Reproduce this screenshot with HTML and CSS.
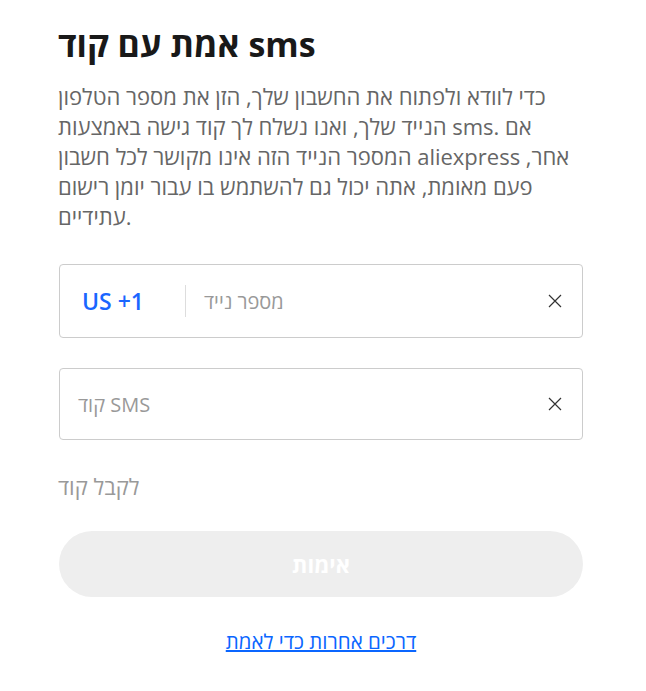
FILE: index.html
```html
<!DOCTYPE html>
<html lang="he">
<head>
<meta charset="utf-8">
<link rel="stylesheet" href="styles.css">
</head>
<body>
<div class="page">
  <h1 class="title">אמת עם קוד sms</h1>
  <p class="desc">כדי לוודא ולפתוח את החשבון שלך, הזן את מספר הטלפון הנייד שלך, ואנו נשלח לך קוד גישה באמצעות sms. אם המספר הנייד הזה אינו מקושר לכל חשבון aliexpress אחר, פעם מאומת, אתה יכול גם להשתמש בו עבור יומן רישום עתידיים.</p>
  <div class="field field-phone">
    <span class="country">US +1</span>
    <span class="divider"></span>
    <span class="placeholder">מספר נייד</span>
    <span class="clear"><svg width="14" height="14" viewBox="0 0 14 14"><path d="M1 1L13 13M13 1L1 13" stroke="#333" stroke-width="1.2" fill="none"/></svg></span>
  </div>
  <div class="field field-code">
    <span class="placeholder">קוד SMS</span>
    <span class="clear"><svg width="14" height="14" viewBox="0 0 14 14"><path d="M1 1L13 13M13 1L1 13" stroke="#333" stroke-width="1.2" fill="none"/></svg></span>
  </div>
  <div class="getcode">לקבל קוד</div>
  <button class="verify">אימות</button>
  <div class="other"><a href="#">דרכים אחרות כדי לאמת</a></div>
</div>
</body>
</html>
```
FILE: styles.css
```css
html, body {
  margin: 0;
  padding: 0;
  background: #fff;
}
body {
  font-family: "Open Sans", "Noto Sans", sans-serif;
}
.page {
  width: 524px;
  padding: 21px 0 0 59px;
  display: flex;
  flex-direction: column;
}
.title {
  margin: 0 0 0 -1px;
  font-size: 34px;
  font-weight: 700;
  line-height: 46px;
  color: #191919;
}
.desc {
  margin: 14px 0 0 -1px;
  font-size: 22px;
  line-height: 30px;
  color: #666;
}
.field {
  box-sizing: border-box;
  border: 1px solid #ccc;
  border-radius: 4px;
  display: flex;
  align-items: center;
  padding: 0 20px 0 22px;
}
.field-phone {
  height: 74px;
  margin-top: 33px;
}
.field-code {
  height: 72px;
  margin-top: 30px;
  padding-left: 18px;
}
.country {
  color: #1a66ff;
  font-size: 23px;
  font-weight: 600;
  width: 103px;
}
.divider {
  width: 1px;
  height: 32px;
  background: #ddd;
  margin-right: 18px;
}
.placeholder {
  flex: 1;
  color: #999;
  font-size: 20px;
}
.clear {
  display: flex;
  width: 14px;
  height: 14px;
}
.getcode {
  margin-top: 32px;
  font-size: 22px;
  color: #999;
  line-height: 28px;
  margin-left: -1px;
}
.verify {
  margin-top: 31px;
  height: 66px;
  border: none;
  border-radius: 33px;
  background: #eee;
  color: #fff;
  font-family: inherit;
  font-size: 22px;
  font-weight: 700;
}
.other {
  margin-top: 31px;
  text-align: center;
  font-size: 20.5px;
  line-height: 26px;
}
.other a {
  color: #0a66ff;
  text-decoration: underline;
  text-decoration-thickness: 2px;
}
```
